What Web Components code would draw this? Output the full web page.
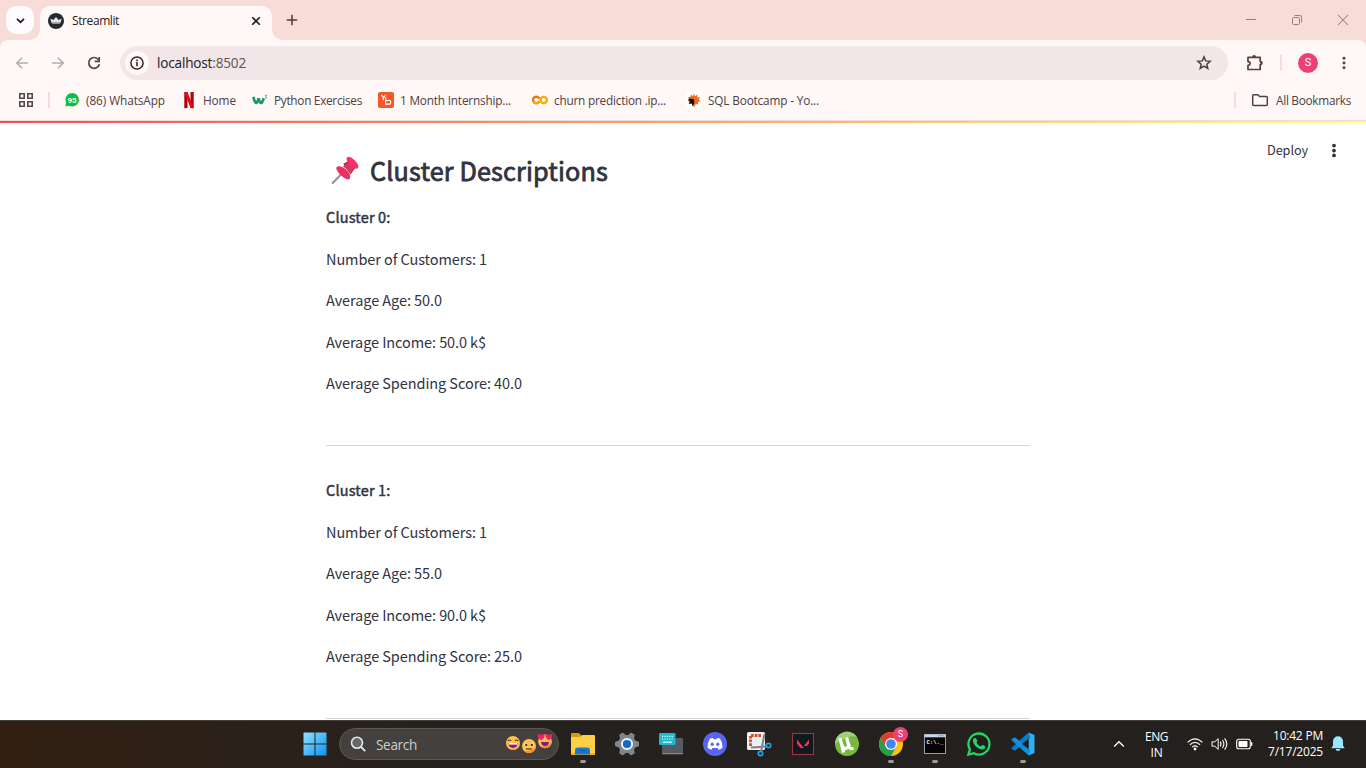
<!DOCTYPE html>
<html lang="en">
<head>
<meta charset="utf-8">
<title>Streamlit</title>
<style>
html,body{margin:0;height:100%;overflow:hidden;background:#fff}
</style>
</head>
<body>
<desktop-screen></desktop-screen>
<script>
const ICONS = {
  chevron:['0 0 12 12','<path d="M2.2 4.2 6 8l3.8-3.8" fill="none" stroke="#1f1a1a" stroke-width="1.9"/>'],
  streamlit:['0 0 16 16','<circle cx="8" cy="8" r="8" fill="#262730"/><path d="M2.3 5.4 5.4 7.1 8 3.9l2.6 3.2 3.1-1.7-1.4 4.9H3.7z" fill="#e4e4e6"/><path d="M3.8 9.1h8.4l-.4 1.6H4.2z" fill="#a9a9ad"/>'],
  close:['0 0 10 10','<path d="m1.2 1.2 7.6 7.6m0-7.6L1.2 8.8" stroke="#1f1a1a" stroke-width="1.6" fill="none"/>'],
  plus:['0 0 12 12','<path d="M6 .8v10.4M.8 6h10.4" stroke="#4b3b39" stroke-width="1.5" fill="none"/>'],
  min:['0 0 12 12','<path d="M1 5.5h10" stroke="#94817e" fill="none"/>'],
  max:['0 0 12 12','<rect x="1.5" y="3.5" width="7" height="7" rx="1.2" fill="none" stroke="#94817e"/><path d="M3.5 1.5h5.3a1.8 1.8 0 0 1 1.8 1.8v5.2" fill="none" stroke="#94817e"/>'],
  wclose:['0 0 12 12','<path d="m1 1 10 10m0-10L1 11" stroke="#94817e" stroke-width="1.05" fill="none"/>'],
  back:['0 0 16 16','<path d="M14 8H2.8m5.3-5.3L2.7 8l5.4 5.3" stroke="#b8abac" stroke-width="1.6" fill="none"/>'],
  forward:['0 0 16 16','<path d="M2 8h11.2M7.9 2.7 13.3 8l-5.4 5.3" stroke="#b8abac" stroke-width="1.6" fill="none"/>'],
  reload:['0 0 16 16','<path d="M12.5 4.7A5.4 5.4 0 1 0 13.4 9.2" stroke="#5c403d" stroke-width="1.7" fill="none"/><path d="M13.2 1.9v4.5H8.7" stroke="#5c403d" stroke-width="1.7" fill="none"/>'],
  info:['0 0 16 16','<circle cx="8" cy="8" r="6.1" fill="none" stroke="#30282b" stroke-width="1.5"/><path d="M8 7v4.2M8 4.6v1.6" stroke="#30282b" stroke-width="1.6"/>'],
  star:['0 0 16 16','<path d="m8 1.9 1.7 4 4.4.4-3.3 2.9 1 4.3L8 11.2l-3.8 2.3 1-4.3L1.9 6.3l4.4-.4z" fill="none" stroke="#4b3f43" stroke-width="1.5"/>'],
  puzzle:['0 0 18 18','<path d="M2 3.3h12.200v4.100c2.200.2 2.200 3 0 3.200v4.900H2v-4.100c2.800-.3 2.800-3.400 0-3.700z" fill="none" stroke="#55403d" stroke-width="1.7" stroke-linejoin="round"/><path d="M6.200 3.100a1.900 2 0 0 1 3.800 0zM14.4 7.200a2 1.800 0 0 1 0 3.600z" fill="#55403d"/>'],
  dots:['0 0 16 16','<g fill="#55403d"><circle cx="8" cy="2.6" r="1.7"/><circle cx="8" cy="8" r="1.7"/><circle cx="8" cy="13.4" r="1.7"/></g>'],
  pagedots:['0 0 16 16','<g fill="#31333f"><circle cx="8" cy="2.7" r="2"/><circle cx="8" cy="8" r="2"/><circle cx="8" cy="13.3" r="2"/></g>'],
  apps:['0 0 16 16','<path d="M1.8 1.8h4.4v4.4H1.8zM9.8 1.8h4.4v4.4H9.8zM1.8 9.8h4.4v4.4H1.8zM9.8 9.8h4.4v4.4H9.8z" fill="none" stroke="#55474a" stroke-width="1.6"/>'],
  folderline:['0 0 18 16','<path d="M2.6 2.8h4.2l1.8 1.8h6.8q.9 0 .9.9v7.1q0 .9-.9.9H2.6q-.9 0-.9-.9V3.7q0-.9.9-.9z" fill="none" stroke="#4f4341" stroke-width="1.5"/>'],
  wabadge:['0 0 16 16','<circle cx="8.2" cy="7.7" r="6.8" fill="#0dbf3f"/><path d="m1.4 14.6.8-5 4 3.8z" fill="#0dbf3f"/><text x="8.1" y="10.7" font-family="Roboto,sans-serif" font-weight="700" font-size="8" text-anchor="middle" fill="#fff">95</text>'],
  netflix:['0 0 16 16','<path d="M3.300 0h3.200v16l-3.200.2zM9.5 0h3.200v16.200l-3.200-.2z" fill="#a60710"/><path d="M3.300 0h3.200l6.200 16.200-3.200-.2z" fill="#e50914"/>'],
  w3:['0 0 18 16','<path d="M1.5 4.5c1.3 5 2.3 7.3 3.4 6.8 1-.5 2-3.4 2.5-5.2.5 2.6 1.8 5.6 3 5.2 1.2-.5 2-2.8 2.8-5.3" fill="none" stroke="#139a68" stroke-width="3"/><path d="M14.4 2.7h2l-1 1.6q1.4.1 1.1 1.2-.4.8-1.9.5" fill="none" stroke="#20a575" stroke-width=".9"/>'],
  yb:['0 0 16 16','<rect width="16" height="16" rx="2" fill="#f1592a"/><path d="M3.400 2.800 5.600 5.700 7.600 2.800M5.600 5.700 5 8.200M7.700 5.200v6.900h4.100q.8 0 .8-.8V9.300q0-.8-.8-.8H7.700" fill="none" stroke="#fff" stroke-width="1.100"/>'],
  colab:['0 0 16 16','<circle cx="11.700" cy="8" r="3.2" fill="none" stroke="#f9ab00" stroke-width="2.3"/><path d="M7.300 6.500A3.300 3.300 0 1 0 7.300 9.500" fill="none" stroke="#e8710a" stroke-width="2.3"/><path d="M1.600 9.300a3.300 3.300 0 0 0 5.700.2" fill="none" stroke="#f9ab00" stroke-width="2.3"/>'],
  sql:['0 0 16 16','<rect width="16" height="16" fill="#fff"/><path d="m8 1.5 1 2.7 2.6-1.8-.2 3 3-.1-1.7 2.3 2 1.9-2.9.4.5 2.8-2.5-1-1 2.8H7L5 10.4 1.8 9l1.700-2-1.800-2.100 3-.1.2-2.5 2.200 1.900z" fill="#f26a1b"/><path d="M2 6.900 4.500 6.500 8.200 7.400v4.100L6.400 14 5.800 11.500 2.700 12l1.100-2.400z" fill="#111"/>'],
  pin:['0 0 32 32','<path d="m12.7 18.6-9.800 10.200" stroke="#998da0" stroke-width="2.2" stroke-linecap="round"/><path d="m14.1 8.3 7.1-3.7 6.6 6.8-5.5 7.8z" fill="#c51c51"/><path d="M7.2 11.6c-1.5 1.5 1 5.7 4.5 9s7.3 5.400 9 3.800c1.700-1.700.7-5.600-2.200-8.900-3.500-3.700-9.200-6-11.300-3.900z" fill="#ed3064"/><path d="m13.700 11.200 7-5.100 5.300 5.600-4.200 8.300q-2.300-5.300-8.100-8.800z" fill="#cf3d66"/><path d="M18.300 1.400c-1.700 1.600.1 5.300 3.100 8.200 2.900 2.900 6.800 5 8.300 3.500 1.600-1.600-.1-5.300-3.200-8.300-3-3-6.700-5-8.200-3.400z" fill="#ff2f69"/>'],
  windows:['0 0 24 24','<defs><linearGradient id="g" x1="0" y1="0" x2="1" y2="1"><stop stop-color="#8ee3ff"/><stop offset="1" stop-color="#0d91f5"/></linearGradient></defs><path d="M1 .5h10.5v11H.5V1q0-.5.5-.5zM12.5.5H23q.5 0 .5.5v10.500h-11zM.5 12.5h11v11H1q-.5 0-.5-.5zM12.5 12.5h11V23q0 .5-.5.5H12.500z" fill="url(#g)"/>'],
  search:['0 0 16 16','<circle cx="7" cy="6.7" r="5.5" fill="#65666a" stroke="#e7e7e7" stroke-width="1.6"/><path d="m11 10.900 3.700 3.700" stroke="#e7e7e7" stroke-width="1.9" stroke-linecap="round"/>'],
  smile:['0 0 16 16','<circle cx="8" cy="8" r="7" fill="#ffc247"/><path d="M10 15a7 7 0 0 0 4.800-6C14 12.500 11 14.500 4.500 14Q7 15.500 10 15z" fill="#f58d34"/><path d="M2.800 6q1.600-2 3.200 0M10 6q1.600-2 3.200 0" stroke="#5b3625" stroke-width="1.200" fill="none"/><path d="M3.300 8h9.400q-.4 4.900-4.700 4.900T3.300 8z" fill="#8b168b"/><path d="M3.800 8h8.400v1.600H3.800z" fill="#fff"/>'],
  flat:['0 0 16 16','<circle cx="8" cy="8" r="7" fill="#ffc247"/><path d="M15 8a7 7 0 0 1-12 5Q12 14 15 8z" fill="#f58d34"/><ellipse cx="5" cy="7" rx="1.600" ry="1.800" fill="#fff"/><ellipse cx="11" cy="7" rx="1.600" ry="1.800" fill="#fff"/><circle cx="5.200" cy="7" r="1.200" fill="#43303c"/><circle cx="10.800" cy="7" r="1.200" fill="#43303c"/><path d="M5 11h6" stroke="#5b3625" stroke-width="1.200"/>'],
  hearts:['0 0 16 16','<circle cx="8" cy="8.400" r="6.800" fill="#ffc247"/><path d="M15 8a7 7 0 0 1-12 5Q12 14 15 8z" fill="#f58d34"/><path d="M4 7.300Q-.5 4 .8 1.800 2.200.2 4 2.200 6.800-.2 7.600 2.300 8 5 4 7.300zM12 7.300Q8 5 8.500 2.300 9.500-.2 12 2.200 14-.2 15.300 1.800 16 4.500 12 7.300z" fill="#f32169"/><path d="M4 9h8q-.3 4-4 4T4 9z" fill="#8b168b"/>'],
  explorer:['0 0 24 24','<path d="M0 2q0-1 1-1h7l2 2v5H0z" fill="#d89a0b"/><path d="M0 5h9l2-2h12q1 0 1 1v18H0z" fill="#ffcf48"/><path d="M0 21h24v2H0z" fill="#efae25"/><path d="M4 22.500v-4q0-3 3-3h9q3 0 3 3v4z" fill="#1678cf"/><path d="M8 18.500h7" stroke="#0959a6"/>'],
  gear:['0 0 24 24','<g fill="#7e8790"><circle cx="12" cy="12" r="9"/><path id="t" d="M8.500 4 9.800.4q.1-.4.6-.4h3.200q.5 0 .6.400L15.500 4v16l-1.300 3.600q-.1.400-.6.400h-3.200q-.5 0-.6-.4L8.500 20z" transform="rotate(30 12 12)"/><path d="M8.500 4 9.800.4q.1-.4.6-.4h3.200q.5 0 .6.400L15.500 4v16l-1.300 3.600q-.1.400-.6.400h-3.200q-.5 0-.6-.4L8.500 20z" transform="rotate(90 12 12)"/><path d="M8.500 4 9.800.4q.1-.4.6-.4h3.200q.5 0 .6.400L15.500 4v16l-1.300 3.600q-.1.400-.6.400h-3.200q-.5 0-.6-.4L8.500 20z" transform="rotate(150 12 12)"/></g><circle cx="12" cy="12" r="5.100" fill="#116ac1" stroke="#f0f1f3" stroke-width="2"/>'],
  keyboard:['0 0 24 24','<rect x="3" y="6" width="21" height="16.500" rx="1" fill="#565b61"/><path d="M3 21.500h21" stroke="#81878d"/><rect x="0" y="1" width="16.500" height="12" rx="1.200" fill="#1fb8cf"/><path d="M3 4.300h11M3 7h11" stroke="#e6ffff" stroke-width="1.200" stroke-dasharray="1.200 1.200"/><path d="M4 10.200h9" stroke="#fff" stroke-width="1.100"/>'],
  discord:['0 0 24 24','<circle cx="12" cy="12" r="12" fill="#5865f2"/><path d="M7 6.500 9.800 6l.7 1.200h3L14.200 6l2.800.5q2.700 4.200 2.500 9.200-1.700 1.500-4 2l-.9-1.600H9.400l-.9 1.600q-2.300-.5-4-2Q4.300 10.700 7 6.500z" fill="#fff"/><ellipse cx="9.200" cy="12.300" rx="1.600" ry="1.800" fill="#5865f2"/><ellipse cx="14.800" cy="12.300" rx="1.600" ry="1.800" fill="#5865f2"/>'],
  snip:['0 0 24 24','<rect width="18" height="18" rx="1.500" fill="#eef1f4"/><path d="M3.500 14V3.500H14" stroke="#d94a1b" stroke-width="2.800" stroke-dasharray="2.700 1" fill="none"/><path d="M17.500 2 14 20M4 15.500l15-1" stroke="#7b8186" stroke-width="2"/><circle cx="13.500" cy="21.500" r="2.200" fill="#17242d" stroke="#20a4ec" stroke-width="1.700"/><circle cx="21.500" cy="13.500" r="2.200" fill="#17242d" stroke="#20a4ec" stroke-width="1.700"/>'],
  valorant:['0 0 24 24','<rect x="1.500" y="1.500" width="21" height="21" fill="#101822" stroke="#a43142" stroke-width="1.100"/><path d="m6 7.500 6.800 8.500H9.500L6 11.700zM18 7.500v4.200l-2 2.300h-3.200z" fill="#f1384b"/>'],
  utorrent:['0 0 24 24','<circle cx="12" cy="12" r="12" fill="#79b83f"/><path d="M0 12A12 12 0 0 1 22 5Q14 2 0 12z" fill="#a5cf76"/><path d="M5 6.200 8.600 20.500M6.600 12.400q1.200 4.600 4.300 4 3.400-.8 2.300-5L11.600 5.500M13.400 11.500l.9 3.200q.9 2.700 4.200 1.600" fill="none" stroke="#fff" stroke-width="3.200"/>'],
  chrome:['0 0 24 24','<circle cx="12" cy="12" r="12" fill="#fbc116"/><path d="M1.600 6A12 12 0 0 1 22.400 6H12L6.800 15z" fill="#e33b2e"/><path d="M1.600 6A12 12 0 0 0 12 24L17.200 15H6.800z" fill="#22a04b"/><circle cx="12" cy="12" r="6" fill="#fff"/><circle cx="12" cy="12" r="4.800" fill="#4285f4"/>'],
  terminal:['0 0 24 24','<rect x="1.500" y="2.500" width="21" height="19" fill="#050505" stroke="#999da3"/><path d="M1.500 2.500h21v2.800h-21z" fill="#c9d6ed"/><path d="M15.500 3.800h5.500" stroke="#536b9b" stroke-dasharray="1 1"/><text x="3.500" y="11.500" font-family="Liberation Mono,monospace" font-size="5.500" font-weight="700" fill="#fff" textLength="17">C:\\._</text>'],
  whatsapp:['0 0 24 24','<path d="m1.400 22.600 1.500-5.300a10.500 10.500 0 1 1 4 3.900z" fill="#211f1d" stroke="#25d366" stroke-width="2.300"/><path d="M7 6.300q1.900-1.100 2.500.7l.8 1.900q.1.600-.9 1.700 1.500 2.900 4.300 4l1.500-1.500q.4-.2 3 1.200.4 2.800-2.700 3.200c-3.500.3-9.500-4.600-9.600-8.800Q6 7.300 7 6.300z" fill="#25d366"/>'],
  vscode:['0 0 24 24','<path d="m17.500.5 6 2.500v18l-6 2.500z" fill="#32adf3"/><path d="m17.500.5 2 5.500L4 18.800 1 17.200q-1-.8 0-1.800z" fill="#087bc9"/><path d="M4 5.200 19.500 18l-2 5.500L1 8.600q-1-1 0-1.900z" fill="#0d8fdb"/><path d="M17.500 7v10L11 12z" fill="#211f1d"/>'],
  up:['0 0 12 12','<path d="M1.200 8.500 6 3.700l4.800 4.800" fill="none" stroke="#fff" stroke-width="1.300"/>'],
  wifi:['0 0 16 14','<path d="M.6 5.400q7.400-7.200 14.800 0M2.900 7.800q5.100-4.800 10.200 0M5.200 10.100q2.800-2.500 5.600 0" fill="none" stroke="#f6f6f6" stroke-width="1.200"/><circle cx="8" cy="12" r="1.400" fill="#fff"/>'],
  volume:['0 0 17 14','<path d="M1 4.800h2.700L7.200 1.700v10.600L3.700 9.200H1z" fill="none" stroke="#fff"/><path d="M9.200 4.600q1.700 2.400 0 4.800M11.400 3q3 4 0 8M13.600 1.400q4.400 5.600 0 11.200" fill="none" stroke="#fff" stroke-width="1.100"/>'],
  battery:['0 0 17 12','<rect x=".7" y="1.200" width="13.600" height="9.600" rx="2" fill="none" stroke="#fff" stroke-width="1.100"/><rect x="2.500" y="3" width="9" height="6" rx=".7" fill="#fff"/><path d="M15 4h.6q.9 0 .9 2t-.9 2H15z" fill="#fff"/>'],
  bell:['0 0 16 18','<path d="M8 1.200a5 5 0 0 1 5 5v4.200l1.700 2.800H1.300L3 10.400V6.200a5 5 0 0 1 5-5zM5.600 14h4.800q-.5 2-2.400 2T5.600 14z" fill="#98e7ff"/>']
};

/* Registers an element whose shadow root is cloned from a template. */
function component(name, html, setup) {
  const tpl = document.createElement('template');
  tpl.innerHTML = html;
  customElements.define(name, class extends HTMLElement {
    connectedCallback() {
      if (this.shadowRoot) return;
      this.attachShadow({mode:'open'}).append(tpl.content.cloneNode(true));
      if (setup) setup(this, this.shadowRoot);
    }
  });
}

component('ui-icon', `<style>:host{display:block;flex:none}svg{display:block;width:100%;height:100%;overflow:visible}</style><svg></svg>`, (el, root) => {
  const [box, art] = ICONS[el.getAttribute('name')];
  el.style.width = (el.getAttribute('w') || 16) + 'px';
  el.style.height = (el.getAttribute('h') || el.getAttribute('w') || 16) + 'px';
  const svg = root.querySelector('svg');
  svg.setAttribute('viewBox', box);
  svg.innerHTML = art;
});

/* A single-line label that tracks its letters to fill a set width. */
component('fit-text', `<style>:host{display:block;flex:none;white-space:nowrap}span{display:inline-block}</style><span><slot></slot></span>`, (el, root) => {
  const w = +el.getAttribute('w'), span = root.querySelector('span');
  el.style.width = w + 'px';
  const natural = span.getBoundingClientRect().width;
  if (natural) span.style.letterSpacing = ((w - natural) / el.textContent.length) + 'px';
});

customElements.define('browser-tab', class extends HTMLElement {
  connectedCallback() {
    if (this.shadowRoot) return;
    this.attachShadow({mode:'open'}).innerHTML = `<style>
:host{display:flex;align-items:center;box-sizing:border-box;width:232px;height:34px;margin-left:6px;padding:0 11px 5px 8px;background:#fff8f6;border-radius:10px 10px 0 0;position:relative;color:#1f1a1a;font-size:12px}
:host::before,:host::after{content:"";position:absolute;bottom:0;width:10px;height:10px}
:host::before{left:-10px;background:radial-gradient(circle at 0 0,transparent 9.5px,#fff8f6 10px)}
:host::after{right:-10px;background:radial-gradient(circle at 100% 0,transparent 9.5px,#fff8f6 10px)}
fit-text{margin-left:8px}.x{margin-left:auto}</style>
<ui-icon name="streamlit"></ui-icon><fit-text w="47">${this.textContent}</fit-text><ui-icon class="x" name="close" w="10"></ui-icon>`;
  }
});

component('tab-strip', `<style>
:host{display:flex;height:40px;box-sizing:border-box;padding:6px 17px 0 6px;background:#f8dcd8}
.drop{width:28px;height:28px;border-radius:10px;background:#fffbff;display:grid;place-items:center}
.plus{margin:8px 0 0 14px}.win{display:flex;gap:34px;margin:8px 0 0 auto}</style>
<div class="drop"><ui-icon name="chevron" w="11"></ui-icon></div><browser-tab>Streamlit</browser-tab><ui-icon class="plus" name="plus" w="12"></ui-icon>
<div class="win"><ui-icon name="min" w="12"></ui-icon><ui-icon name="max" w="12"></ui-icon><ui-icon name="wclose" w="12"></ui-icon></div>`);

component('address-bar', `<style>
:host{display:flex;align-items:center;height:46px;box-sizing:border-box;padding:0 14px;color:#202124;font-size:13.600px}
.nav{display:flex;gap:20px;width:106px}
.field{display:flex;align-items:center;width:1108px;height:34px;border-radius:17px;background:#f2e6e8;box-sizing:border-box;padding:0 16px 0 5px}
.site{display:grid;place-items:center;width:24px;height:24px;border-radius:50%;background:#fff8f6;margin-right:8px}
.field fit-text{margin-bottom:1px}
.star{margin-left:auto}i{width:2px;height:16px;background:#fddad6}.ext{margin:0 16px 0 18px}
b{width:20px;height:20px;border-radius:50%;background:#ec407a;color:#fff;font:400 11px/20px Roboto,sans-serif;text-align:center;margin:0 18px 0 16px}em{font-style:normal;color:#5e5357}</style>
<div class="nav"><ui-icon name="back"></ui-icon><ui-icon name="forward"></ui-icon><ui-icon name="reload"></ui-icon></div>
<div class="field"><div class="site"><ui-icon name="info"></ui-icon></div><fit-text w="89">localhost<em>:8502</em></fit-text><ui-icon class="star" name="star"></ui-icon></div>
<ui-icon class="ext" name="puzzle" w="18"></ui-icon><i></i><b>S</b><ui-icon name="dots" w="16" h="14"></ui-icon>`);

customElements.define('bookmark-link', class extends HTMLElement {
  connectedCallback() {
    if (this.shadowRoot) return;
    const space = this.getAttribute('space') || 16;
    this.attachShadow({mode:'open'}).innerHTML = `<style>:host{display:flex;align-items:center;gap:6px;margin-right:${space}px}fit-text{margin-bottom:1px}</style>
    <ui-icon name="${this.getAttribute('icon')}"></ui-icon><fit-text w="${this.getAttribute('w')}">${this.textContent}</fit-text>`;
  }
});

component('bookmarks-bar', `<style>
:host{display:flex;align-items:center;height:28px;padding:0 15px 0 18px;color:#4c4043;font-size:11.800px}
i{width:2px;height:16px;background:#fddad6;margin:0 14px 0 14px}
.all{display:flex;align-items:center;margin-left:auto}.all i{margin:0 15px 0 0}.all fit-text{margin:0 0 1px 7px}</style>
<ui-icon name="apps"></ui-icon><i></i>
<bookmark-link icon="wabadge" w="79">(86) WhatsApp</bookmark-link><bookmark-link icon="netflix" w="33">Home</bookmark-link>
<bookmark-link icon="w3" w="88">Python Exercises</bookmark-link><bookmark-link icon="yb" w="111" space="21">1 Month Internship...</bookmark-link>
<bookmark-link icon="colab" w="112" space="20">churn prediction .ip...</bookmark-link><bookmark-link icon="sql" w="111">SQL Bootcamp - Yo...</bookmark-link>
<div class="all"><i></i><ui-icon name="folderline" w="18" h="16"></ui-icon><fit-text w="75">All Bookmarks</fit-text></div>`);

component('browser-chrome', `<style>
:host{display:block;height:121px;background:#f8dcd8}
.tools{height:80px;background:#fff8f6;border-radius:8px 8px 0 0;border-bottom:1px solid #eddcd9}</style>
<tab-strip></tab-strip><div class="tools"><address-bar></address-bar><bookmarks-bar></bookmarks-bar></div>`);

customElements.define('cluster-card', class extends HTMLElement {
  connectedCallback() {
    if (this.shadowRoot) return;
    const a = n => this.getAttribute(n);
    this.attachShadow({mode:'open'}).innerHTML = `<style>
    :host{display:block;height:241px;border-bottom:1px solid #d6d6d9;margin-bottom:31px;font-size:14.5px;line-height:25.6px}
    div{display:flex;flex-direction:column;gap:16px}.title{-webkit-text-stroke:.45px}</style>
    <div><fit-text class="title" w="64.500">Cluster ${a('index')}:</fit-text>
    <fit-text w="161">Number of Customers: ${a('count')}</fit-text><fit-text w="116">Average Age: ${a('age')}</fit-text>
    <fit-text w="160">Average Income: ${a('income')} k$</fit-text><fit-text w="196">Average Spending Score: ${a('score')}</fit-text></div>`;
  }
});

component('streamlit-page', `<style>
:host{display:block;height:599px;overflow:hidden;background:#fff;color:#31333f;font-family:"Noto Sans CJK SC","Noto Sans",sans-serif;position:relative}
.bar{height:2px;background:linear-gradient(90deg,#ff4b4b,#fffd80)}
.tools{position:absolute;top:18px;right:24px;display:flex;align-items:center;gap:18px;font-size:12.700px;line-height:22px}
main{width:704px;margin:0 auto 0 326px}
h2{display:flex;align-items:center;gap:10px;margin:0;padding:31px 0 17px 4px;height:33px;font-size:25.200px;line-height:33px;font-weight:400;-webkit-text-stroke:.8px}
</style>
<div class="bar"></div><div class="tools"><fit-text w="41">Deploy</fit-text><ui-icon name="pagedots" w="16" h="15"></ui-icon></div>
<main><h2><ui-icon name="pin" w="30"></ui-icon><fit-text w="238">Cluster Descriptions</fit-text></h2>
<cluster-card index="0" count="1" age="50.0" income="50.0" score="40.0"></cluster-card>
<cluster-card index="1" count="1" age="55.0" income="90.0" score="25.0"></cluster-card></main>`);

customElements.define('task-app', class extends HTMLElement {
  connectedCallback() {
    if (this.shadowRoot) return;
    const run = this.hasAttribute('running'), badge = this.getAttribute('badge');
    this.attachShadow({mode:'open'}).innerHTML = `<style>
    :host{display:grid;place-items:center;position:relative;width:44px;height:48px}
    i{position:absolute;bottom:5px;left:19px;width:6px;height:3px;border-radius:2px;background:#9d9b99}
    b{position:absolute;left:24px;top:7px;width:15px;height:15px;border-radius:50%;background:#ec407a;color:#fff;font:400 9px/15px Roboto,sans-serif;text-align:center}</style>
    <ui-icon name="${this.getAttribute('icon')}" w="24"></ui-icon>${run ? '<i></i>' : ''}${badge ? `<b>${badge}</b>` : ''}`;
  }
});

component('search-box', `<style>
:host{display:flex;align-items:center;box-sizing:border-box;width:220px;height:32px;border-radius:16px;background:#43403d;border:1px solid #5b5855;padding:0 5px 0 10px;color:#cfcecd;font-size:13.600px}
fit-text{margin-left:10px}.faces{display:flex;margin-left:auto}.mid{margin-top:3px}.end{margin-top:-2px}</style>
<ui-icon name="search"></ui-icon><fit-text w="41">Search</fit-text><div class="faces"><ui-icon name="smile"></ui-icon><ui-icon class="mid" name="flat"></ui-icon><ui-icon class="end" name="hearts"></ui-icon></div>`);

component('task-bar', `<style>
:host{display:flex;align-items:center;height:48px;box-sizing:border-box;padding:0 20px 0 303px;color:#fff;font-size:12px;background:linear-gradient(90deg,#321f12,#2a211a 280px,#25211d 500px,#24201e);box-shadow:inset 0 1px #43403b}
search-box{margin:0 2px 0 12px}.tray{display:flex;align-items:center;margin-left:auto}
.lang,.clock{display:flex;flex-direction:column;line-height:16px}.lang{align-items:center;margin:1px 19px 0 20px}.clock{align-items:flex-end;margin:0 7px 0 15px}
.net{display:flex;align-items:center;gap:8px}</style>
<ui-icon name="windows" w="24"></ui-icon><search-box></search-box>
<task-app icon="explorer" running></task-app><task-app icon="gear"></task-app><task-app icon="keyboard"></task-app><task-app icon="discord"></task-app><task-app icon="snip"></task-app><task-app icon="valorant"></task-app><task-app icon="utorrent"></task-app><task-app icon="chrome" running badge="S"></task-app><task-app icon="terminal" running></task-app><task-app icon="whatsapp"></task-app><task-app icon="vscode" running></task-app>
<div class="tray"><ui-icon name="up" w="12"></ui-icon><div class="lang"><fit-text w="23">ENG</fit-text><fit-text w="12">IN</fit-text></div>
<div class="net"><ui-icon name="wifi" w="16" h="14"></ui-icon><ui-icon name="volume" w="17" h="14"></ui-icon><ui-icon name="battery" w="17" h="12"></ui-icon></div>
<div class="clock"><fit-text w="50">10:42 PM</fit-text><fit-text w="55">7/17/2025</fit-text></div><ui-icon name="bell" w="16" h="18"></ui-icon></div>`);

component('desktop-screen', `<style>:host{display:flex;flex-direction:column;width:1366px;height:768px;overflow:hidden;font-family:"Open Sans","Noto Sans",sans-serif}</style>
<browser-chrome></browser-chrome><streamlit-page></streamlit-page><task-bar></task-bar>`);
</script>
</body>
</html>
